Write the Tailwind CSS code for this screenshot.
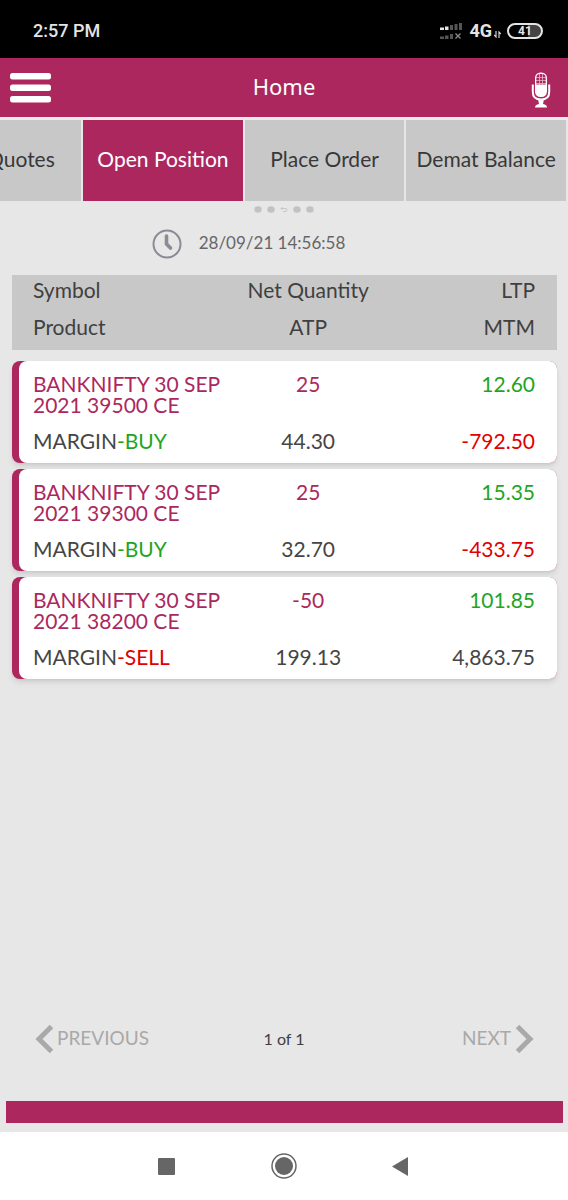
<!DOCTYPE html>
<html lang="en">
<head>
<meta charset="utf-8">
<meta name="viewport" content="width=device-width, initial-scale=1">
<title>Home</title>
<script src="https://cdn.jsdelivr.net/npm/@tailwindcss/browser@4"></script>
</head>
<body class="flex min-h-screen flex-col overflow-x-hidden bg-[#e7e7e7] font-['Lato',sans-serif] text-[#454545]">

<!-- Phone status bar -->
<div class="flex h-[58px] items-center justify-between bg-black pt-1 pr-[25px] pl-[33px] font-['Roboto',sans-serif] font-medium text-[#e4e4e4]">
  <span class="text-lg">2:57 PM</span>
  <div class="flex items-center">
    <svg class="mr-1.5 h-4 w-[23px]" viewBox="0 0 23 16" aria-hidden="true">
      <g fill="#e4e4e4"><rect x="0" y="4.500" width="4" height="2.500"/><rect x="5" y="3.500" width="3.500" height="3.500"/></g>
      <g fill="#555"><rect x="10" y="2" width="3" height="5"/><rect x="14.500" y="1" width="3" height="6"/><rect x="19" y="0" width="3" height="7"/>
      <rect x="0" y="13.500" width="4" height="2.500"/><rect x="5" y="12.500" width="3.500" height="3.500"/><rect x="10" y="11" width="3" height="5"/></g>
      <path d="M15.500 10.500l5 5m0-5l-5 5" stroke="#888" stroke-width="1.400"/>
    </svg>
    <span class="text-lg font-bold">4G</span>
    <svg class="mt-1.5 mr-1.5 ml-0.5 h-[7px] w-[7px]" viewBox="0 0 7 7" fill="none" stroke="#d0d0d0" stroke-width="1.200" aria-hidden="true"><path d="M2 0v6L0 4M5 7V1l2 2"/></svg>
    <span class="flex h-4 w-9 items-center justify-center rounded-full border-2 border-[#e4e4e4] bg-linear-to-r from-black from-60% to-[#444] to-60% text-xs font-bold">41</span>
  </div>
</div>

<!-- App bar -->
<header class="flex h-[59px] items-center justify-between bg-[#ad275f] pr-[17px] pl-2.5 text-white">
  <button class="w-[41px]" aria-label="Menu">
    <svg class="h-[30px] w-[41px]" viewBox="0 0 41 30" fill="white"><rect width="41" height="6.500" rx="2.500"/><rect y="11.500" width="41" height="6.500" rx="2.500"/><rect y="23" width="41" height="6.500" rx="2.500"/></svg>
  </button>
  <h1 class="pb-0.5 font-['Noto_Sans',sans-serif] text-[22px]">Home</h1>
  <button class="flex w-[34px] justify-end" aria-label="Voice search">
    <svg class="mt-1 h-9 w-5" viewBox="0 0 20 36">
      <rect x="4" y="0.500" width="12" height="24.500" rx="5.500" fill="white"/>
      <path d="M5.300 12.500V6Q5.300 2 9 2h2Q14.700 2 14.700 6v6.500z" fill="#ad275f"/>
      <path d="M8.500 2v11M11.500 2v11M5 5.500h10M5 8.500h10M5 11.500h10" stroke="white" stroke-width=".8" opacity=".65"/>
      <path d="M1.800 12.500v7.500q0 7.500 8.200 7.500t8.200-7.500v-7.500" fill="none" stroke="white" stroke-width="2"/>
      <path d="M7 27h6l-1 5q4 .5 4 3.500H4q0-3 4-3.500z" fill="white"/>
    </svg>
  </button>
</header>

<nav class="flex justify-end gap-0.5 overflow-hidden border-t-3 border-[#ececec] pr-0.5 text-[21px] text-[#383838]" aria-label="Sections">
  <a href="#" class="flex h-[81px] w-[28.2%] shrink-0 items-center justify-center bg-[#c8c8c8] pb-1 whitespace-nowrap">Get Quotes</a>
  <a href="#" aria-current="page" class="flex h-[81px] w-[28.2%] shrink-0 items-center justify-center bg-[#ad275f] pb-1 whitespace-nowrap text-white">Open Position</a>
  <a href="#" class="flex h-[81px] w-[28.2%] shrink-0 items-center justify-center bg-[#c8c8c8] pb-1 whitespace-nowrap">Place Order</a>
  <a href="#" class="flex h-[81px] w-[28.2%] shrink-0 items-center justify-center bg-[#c8c8c8] pb-1 whitespace-nowrap">Demat Balance</a>
</nav>

<main class="flex grow flex-col">
  <div class="mt-[5px] flex justify-center">
    <svg class="h-[7px] w-[60px]" viewBox="0 0 60 7" fill="#c2c2c2" aria-hidden="true">
      <ellipse cx="4" cy="3.500" rx="3.700" ry="3.300"/><ellipse cx="17" cy="3.500" rx="3.700" ry="3.300"/><ellipse cx="43" cy="3.500" rx="3.700" ry="3.300"/><ellipse cx="56" cy="3.500" rx="3.700" ry="3.300"/>
      <path d="M27 2.500h4q2 0 2 1.500t-2 1.500h-2M28.500 1L27 2.500 28.500 4" fill="none" stroke="#c2c2c2" stroke-width=".9"/>
    </svg>
  </div>

  <div class="mt-3.5 flex h-8 items-center justify-center pr-[71px]">
    <svg class="mt-0.5 mr-[17px] h-[30px] w-[30px]" viewBox="0 0 30 30" fill="none" stroke="#8b8b95" aria-hidden="true"><circle cx="15" cy="15" r="13.500" stroke-width="2"/><path d="M14.500 7v8l4 4" stroke-width="3.600" stroke-linecap="round"/></svg>
    <time class="text-[17px] text-[#666]" datetime="2021-09-28T14:56:58">28/09/21 14:56:58</time>
  </div>

  <table class="mr-[11px] ml-3 mt-4 block text-[21px] leading-[21px]">
    <thead class="block text-[#404040]">
      <tr class="grid grid-cols-[80fr_55fr_65fr] bg-[#c8c8c8] pt-1 pb-[13px] pl-[7px]">
        <th scope="col" class="flex flex-col gap-4 pl-3.5 text-left font-normal"><span>Symbol</span><span>Product</span></th>
        <th scope="col" class="flex flex-col items-center gap-4 font-normal whitespace-nowrap"><span>Net Quantity</span><span>ATP</span></th>
        <th scope="col" class="flex flex-col gap-4 pr-[22px] text-right font-normal"><span>LTP</span><span>MTM</span></th>
      </tr>
    </thead>
    <tbody class="mt-[11px] flex flex-col gap-1.5">
      <tr class="grid grid-cols-[80fr_55fr_65fr] rounded-lg bg-[#ad275f] pl-[7px] shadow-md">
        <td class="flex flex-col justify-between gap-[15px] rounded-l-lg bg-white py-3 pl-3.5"><span class="text-[#ad275f]">BANKNIFTY 30 SEP 2021 39500 CE</span><span>MARGIN<span class="text-[#1fa51f]">-BUY</span></span></td>
        <td class="flex flex-col justify-between bg-white py-3 text-center"><span class="text-[#ad275f]">25</span><span>44.30</span></td>
        <td class="flex flex-col justify-between rounded-r-lg bg-white py-3 pr-[22px] text-right"><span class="text-[#1fa51f]">12.60</span><span class="text-[#e00000]">-792.50</span></td>
      </tr>
      <tr class="grid grid-cols-[80fr_55fr_65fr] rounded-lg bg-[#ad275f] pl-[7px] shadow-md">
        <td class="flex flex-col justify-between gap-[15px] rounded-l-lg bg-white py-3 pl-3.5"><span class="text-[#ad275f]">BANKNIFTY 30 SEP 2021 39300 CE</span><span>MARGIN<span class="text-[#1fa51f]">-BUY</span></span></td>
        <td class="flex flex-col justify-between bg-white py-3 text-center"><span class="text-[#ad275f]">25</span><span>32.70</span></td>
        <td class="flex flex-col justify-between rounded-r-lg bg-white py-3 pr-[22px] text-right"><span class="text-[#1fa51f]">15.35</span><span class="text-[#e00000]">-433.75</span></td>
      </tr>
      <tr class="grid grid-cols-[80fr_55fr_65fr] rounded-lg bg-[#ad275f] pl-[7px] shadow-md">
        <td class="flex flex-col justify-between gap-[15px] rounded-l-lg bg-white py-3 pl-3.5"><span class="text-[#ad275f]">BANKNIFTY 30 SEP 2021 38200 CE</span><span>MARGIN<span class="text-[#e00000]">-SELL</span></span></td>
        <td class="flex flex-col justify-between bg-white py-3 text-center"><span class="text-[#ad275f]">-50</span><span>199.13</span></td>
        <td class="flex flex-col justify-between rounded-r-lg bg-white py-3 pr-[22px] text-right"><span class="text-[#1fa51f]">101.85</span><span>4,863.75</span></td>
      </tr>
    </tbody>
  </table>

  <div class="mt-auto mb-[47px] grid grid-cols-3 items-center px-[34px] text-[19px] text-[#a9a9a9]">
    <button class="flex items-center gap-1">
      <svg class="h-[30px] w-[19px]" viewBox="0 0 19 30" fill="none" stroke="#a9a9a9" stroke-width="5" aria-hidden="true"><path d="M17.500 2.500L5 15l12.500 12.500"/></svg><span class="pb-0.5">PREVIOUS</span>
    </button>
    <span class="text-center text-base text-[#404040]">1 of 1</span>
    <button class="flex items-center justify-end gap-1"><span class="pb-0.5">NEXT</span><svg class="h-[30px] w-[19px]" viewBox="0 0 19 30" fill="none" stroke="#a9a9a9" stroke-width="5" aria-hidden="true"><path d="M2.500 2.500L15 15 2.500 27.500"/></svg>
    </button>
  </div>
</main>

<footer>
  <div class="mr-[5px] mb-[9px] ml-1.5 h-[22px] bg-[#ad275f]"></div>
  <!-- System navigation -->
  <div class="flex h-[68px] items-center justify-center gap-[95px] bg-white">
    <button class="size-[19px]" aria-label="Recent apps"><svg class="size-[19px]" viewBox="0 0 19 19"><rect x="1" y="1" width="17" height="17" rx="1" fill="#666"/></svg></button>
    <button class="size-[26px]" aria-label="Home screen"><svg class="size-[26px]" viewBox="0 0 26 26"><circle cx="13" cy="13" r="12" fill="none" stroke="#666" stroke-width="1.500"/><circle cx="13" cy="13" r="9" fill="#666"/></svg></button>
    <button class="size-[19px]" aria-label="Back"><svg class="size-[19px]" viewBox="0 0 19 19"><path d="M0 9.500L16 0v19z" fill="#666"/></svg></button>
  </div>
</footer>
</body>
</html>
